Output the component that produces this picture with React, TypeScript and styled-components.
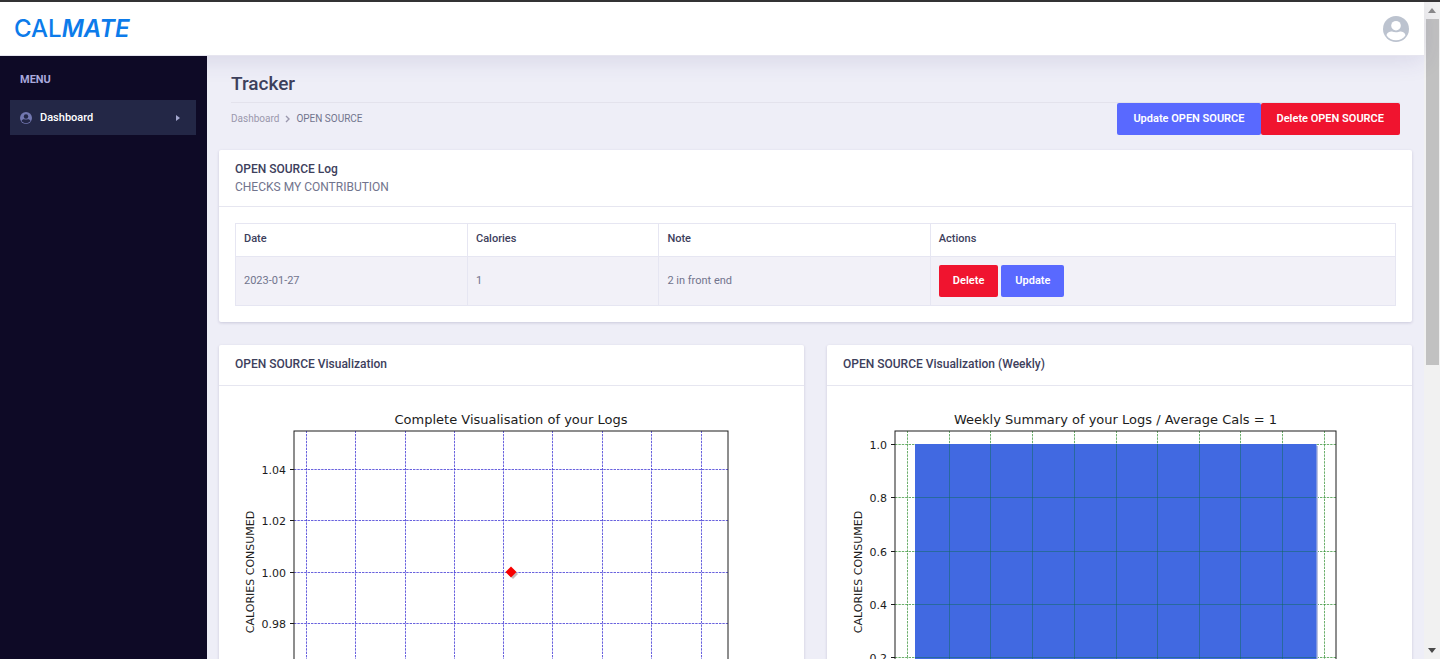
import React from 'react';
import styled, { createGlobalStyle } from 'styled-components';

const GlobalStyle = createGlobalStyle`
  *, *::before, *::after { box-sizing: border-box; }
  body {
    margin: 0;
    background: #eeeef7;
    color: #3d405c;
    font-family: Roboto, "Liberation Sans", sans-serif;
    font-size: 11px;
    line-height: 16px;
  }
  h1, h2, p { margin: 0; }
`;

const Window = styled.div`
  display: grid;
  grid-template-columns: minmax(0, 1fr) 16px;
  height: 100vh;
  overflow: hidden;
  border-top: 2px solid #333234;
`;

const Page = styled.div`
  display: flex;
  flex-direction: column;
  min-height: 0;
`;

const Header = styled.header`
  display: flex;
  flex: none;
  align-items: center;
  justify-content: space-between;
  height: 54px;
  padding: 0 15px 0 14px;
  background: #fff;
  border-bottom: 1px solid #e6e5ef;
  box-shadow: 0 4px 24px rgba(60, 50, 120, 0.12);
  z-index: 1;
`;

const Logo = styled.a`
  color: #0c7bea;
  font-family: Inter, sans-serif;
  font-size: 24px;
  font-weight: 500;
  line-height: 32px;
  text-decoration: none;

  em { font-weight: 600; }
`;

const AvatarButton = styled.button`
  display: flex;
  padding: 0;
  border: 0;
  background: none;
`;

const Body = styled.div`
  display: flex;
  flex: 1;
  min-height: 0;
`;

const Sidebar = styled.nav`
  flex: none;
  width: 207px;
  padding: 16px 11px 0 10px;
  background: #0e0a26;
  z-index: 2;
`;

const MenuLabel = styled.p`
  padding: 0 10px 12px;
  color: #a9a8de;
  font-size: 11px;
  font-weight: 700;
`;

const NavLink = styled.a`
  display: flex;
  align-items: center;
  gap: 8px;
  height: 35px;
  padding: 0 16px 0 10px;
  background: #232746;
  color: #fff;
  font-weight: 500;
  text-decoration: none;
`;

const NavText = styled.span`
  flex: 1;
`;

const Main = styled.main`
  flex: 1;
  min-width: 0;
  padding: 16px 12px 0;
  overflow: hidden;
`;

const PageHead = styled.div`
  padding: 0 12px 15px;
`;

const Title = styled.h1`
  padding-bottom: 6px;
  border-bottom: 1px solid #e3e2ec;
  font-size: 19px;
  font-weight: 500;
  line-height: 24px;
`;

const HeadRow = styled.div`
  display: flex;
  align-items: center;
  justify-content: space-between;
`;

const Crumbs = styled.nav`
  display: flex;
  align-items: center;
  gap: 6px;
  color: #71748d;
  font-size: 10px;
`;

const CrumbLink = styled.a`
  color: #9b98ad;
  text-decoration: none;
`;

const ButtonGroup = styled.div<{ $gap?: number }>`
  display: flex;
  gap: ${(p) => p.$gap ?? 0}px;
`;

const Button = styled.button<{ $danger?: boolean; $wide?: boolean }>`
  height: 32px;
  padding: 0 ${(p) => (p.$wide ? 16 : 14)}px;
  border: 0;
  border-radius: 2px;
  background: ${(p) => (p.$danger ? '#f0142f' : '#5969ff')};
  color: #fff;
  font: inherit;
  font-weight: 600;
`;

const Card = styled.section`
  background: #fff;
  border-radius: 2px;
  box-shadow: 0 1px 3px rgba(60, 55, 110, 0.2);
`;

const CardHeader = styled.header`
  padding: 10px 16px 11px;
  border-bottom: 1px solid #e6e6f0;
`;

const CardTitle = styled.h2`
  font-size: 12px;
  font-weight: 500;
  line-height: 19px;
`;

const CardNote = styled.p`
  color: #71748d;
  font-size: 12px;
  line-height: 16px;
`;

const CardBody = styled.div`
  padding: 16px;
`;

const LogTable = styled.table`
  width: 100%;
  border-collapse: collapse;
  table-layout: fixed;

  th, td {
    padding: 8px;
    border: 1px solid #e6e6f2;
    text-align: left;
  }
  th { padding: 7px 8px 9px; font-weight: 500; }
  td { background: #f2f1f8; color: #71748d; }
  th:nth-child(1) { width: 20%; }
  th:nth-child(2) { width: 16.5%; }
  th:nth-child(3) { width: 23.4%; }
`;

const ChartGrid = styled.div`
  display: grid;
  grid-template-columns: repeat(2, minmax(0, 1fr));
  gap: 23px;
  margin-top: 23px;
`;

const Chart = styled.svg`
  display: block;
  width: 100%;
  height: auto;
  font-family: "DejaVu Sans", sans-serif;
  font-size: 11px;
  fill: #1c1c1c;
`;

const Scrollbar = styled.div`
  display: flex;
  flex-direction: column;
  align-items: center;
  background: #f1f1f1;
`;

const ScrollArrow = styled.span`
  display: flex;
  flex: none;
  align-items: center;
  justify-content: center;
  width: 100%;
  height: 17px;
`;

const ScrollTrack = styled.div`
  flex: 1;
  width: 13px;
`;

const ScrollThumb = styled.div`
  height: 55.5%;
  background: #c1c1c1;
`;

function UserIcon({ size, color, hole }: { size: number; color: string; hole: string }) {
  return (
    <svg width={size} height={size} viewBox="0 0 26 26" aria-hidden="true">
      <circle cx="13" cy="13" r="13" fill={color} />
      <circle cx="13" cy="9.7" r="4.8" fill={hole} />
      <path d="M3.6 19.5C3.6 16.8 6.5 15.6 9 15.6C11 16.5 15 16.5 17 15.6C19.5 15.6 22.4 16.8 22.4 19.5C20.5 22.5 17 24.2 13 24.2C9 24.2 5.5 22.5 3.6 19.5Z" fill={hole} />
    </svg>
  );
}

interface PlotProps {
  title: string;
  left: number;
  right: number;
  xs: number[];
  ys: number[];
  labels: string[];
  gridColor: string;
  children?: React.ReactNode;
}

const TOP = 29;
const BOTTOM = 371;

function Plot({ title, left, right, xs, ys, labels, gridColor, children }: PlotProps) {
  return (
    <Chart viewBox="0 0 553 415" role="img" aria-label={title}>
      <text x={(left + right) / 2} y="22" textAnchor="middle" fontSize="13">{title}</text>
      <g stroke={gridColor} strokeOpacity="0.7" strokeDasharray="2.4 1">
        {xs.map((x) => <path key={x} d={`M${x} ${BOTTOM}V${TOP}`} />)}
        {ys.map((y) => <path key={y} d={`M${left} ${y}H${right}`} />)}
      </g>
      {children}
      <rect x={left} y={TOP} width={right - left} height={BOTTOM - TOP} fill="none" stroke="#1c1c1c" />
      {ys.map((y, i) => (
        <g key={y}>
          <path d={`M${left - 4} ${y}H${left}`} stroke="#1c1c1c" />
          <text x={left - 8} y={y + 4} textAnchor="end">{labels[i]}</text>
        </g>
      ))}
      <text transform="translate(19 170) rotate(-90)" textAnchor="middle">CALORIES CONSUMED</text>
    </Chart>
  );
}

const logXs = [71.5, 120.5, 170.5, 219.5, 268.5, 317.5, 367.5, 416.5, 466.5];
const logYs = [67.5, 118.5, 170.5, 221.5, 272.5, 324.5];
const weekXs = [64.5, 106.5, 147.5, 189.5, 231.5, 273.5, 314.5, 356.5, 397.5, 439.5, 481.5];
const weekYs = [42.5, 95.5, 149.5, 202.5, 255.5, 309.5];

export default function App() {
  return (
    <>
      <GlobalStyle />
      <Window>
        <Page>
          <Header>
            <Logo href="#">CAL<em>MATE</em></Logo>
            <AvatarButton aria-label="Account"><UserIcon size={26} color="#bcc3cf" hole="#fff" /></AvatarButton>
          </Header>
          <Body>
            <Sidebar aria-label="Menu">
              <MenuLabel>MENU</MenuLabel>
              <NavLink href="#">
                <UserIcon size={12} color="#7277b0" hole="#232746" />
                <NavText>Dashboard</NavText>
                <svg width="4" height="6" viewBox="0 0 4 6" aria-hidden="true"><path d="M0 0L4 3L0 6Z" fill="#a5a8cf" /></svg>
              </NavLink>
            </Sidebar>
            <Main>
              <PageHead>
                <Title>Tracker</Title>
                <HeadRow>
                  <Crumbs aria-label="Breadcrumb">
                    <CrumbLink href="#">Dashboard</CrumbLink>
                    <svg width="5" height="8" viewBox="0 0 5 8" aria-hidden="true"><path d="M1 1L4 4L1 7" fill="none" stroke="#9b98ad" strokeWidth="1.4" /></svg>
                    <span>OPEN SOURCE</span>
                  </Crumbs>
                  <ButtonGroup>
                    <Button $wide>Update OPEN SOURCE</Button>
                    <Button $wide $danger>Delete OPEN SOURCE</Button>
                  </ButtonGroup>
                </HeadRow>
              </PageHead>
              <Card>
                <CardHeader>
                  <CardTitle>OPEN SOURCE Log</CardTitle>
                  <CardNote>CHECKS MY CONTRIBUTION</CardNote>
                </CardHeader>
                <CardBody>
                  <LogTable>
                    <thead>
                      <tr><th>Date</th><th>Calories</th><th>Note</th><th>Actions</th></tr>
                    </thead>
                    <tbody>
                      <tr>
                        <td>2023-01-27</td>
                        <td>1</td>
                        <td>2 in front end</td>
                        <td>
                          <ButtonGroup $gap={3}>
                            <Button $danger>Delete</Button>
                            <Button>Update</Button>
                          </ButtonGroup>
                        </td>
                      </tr>
                    </tbody>
                  </LogTable>
                </CardBody>
              </Card>
              <ChartGrid>
                <Card>
                  <CardHeader><CardTitle>OPEN SOURCE Visualization</CardTitle></CardHeader>
                  <CardBody>
                    <Plot
                      title="Complete Visualisation of your Logs"
                      left={59}
                      right={493}
                      xs={logXs}
                      ys={logYs}
                      labels={['1.04', '1.02', '1.00', '0.98', '0.96', '0.94']}
                      gridColor="#2a1fd0"
                    >
                      <path d="M278 167L283 172L278 177L273 172Z" fill="#c9b9b9" />
                      <path d="M276 164.5L281.5 170L276 175.5L270.5 170Z" fill="#f80000" />
                    </Plot>
                  </CardBody>
                </Card>
                <Card>
                  <CardHeader><CardTitle>OPEN SOURCE Visualization (Weekly)</CardTitle></CardHeader>
                  <CardBody>
                    <Plot
                      title="Weekly Summary of your Logs / Average Cals = 1"
                      left={52}
                      right={493}
                      xs={weekXs}
                      ys={weekYs}
                      labels={['1.0', '0.8', '0.6', '0.4', '0.2', '0.0']}
                      gridColor="#2f8f2f"
                    >
                      <rect x="74" y="44" width="401" height="327" fill="#bcc3e0" />
                      <rect x="72" y="42" width="401.5" height="329" fill="#4169e1" />
                      <g stroke="#0a6a50" strokeOpacity="0.45">
                        {weekXs.slice(1, -1).map((x) => <path key={x} d={`M${x} 42V371`} />)}
                        {weekYs.slice(1).map((y) => <path key={y} d={`M72 ${y}H473`} />)}
                      </g>
                    </Plot>
                  </CardBody>
                </Card>
              </ChartGrid>
            </Main>
          </Body>
        </Page>
        <Scrollbar aria-hidden="true">
          <ScrollArrow>
            <svg width="8" height="5" viewBox="0 0 8 5"><path d="M0 5L4 0L8 5Z" fill="#8a8a8a" /></svg>
          </ScrollArrow>
          <ScrollTrack><ScrollThumb /></ScrollTrack>
          <ScrollArrow>
            <svg width="8" height="5" viewBox="0 0 8 5"><path d="M0 0L4 5L8 0Z" fill="#4a4a4a" /></svg>
          </ScrollArrow>
        </Scrollbar>
      </Window>
    </>
  );
}
